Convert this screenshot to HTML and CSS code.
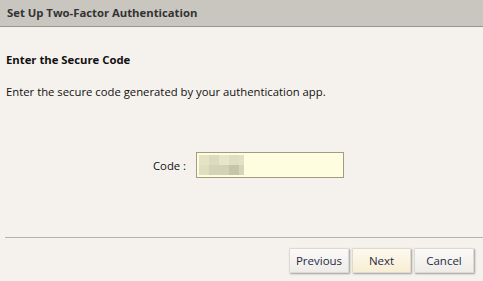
FILE: index.html
```html
<!DOCTYPE html>
<html lang="en">
<head>
    <meta charset="UTF-8">
    <title>Set Up Two-Factor Authentication</title>
    <link rel="stylesheet" href="styles.css">
</head>
<body>
    <div class="dialog">
        <div class="dialog-header">Set Up Two-Factor Authentication</div>
        <div class="dialog-body">
            <h3>Enter the Secure Code</h3>
            <p>Enter the secure code generated by your authentication app.</p>
            <div class="code-row">
                <label for="code">Code :</label>
                <div class="code-input">
                    <!-- blurred code preview -->
                    <div class="blur">
                        <span style="background:#e4e3c4"></span>
                        <span style="background:#dcdbbf"></span>
                        <span style="background:#e6e6c8"></span>
                        <span style="background:#dfdec2"></span>
                        <span style="background:#e2e1c6"></span>
                        <span style="background:#dfdec0"></span>
                        <span style="background:#d4d3b8"></span>
                        <span style="background:#d3d2b7"></span>
                        <span style="background:#c6c5ab"></span>
                        <span style="background:#d6d5bb"></span>
                    </div>
                </div>
            </div>
        </div>
        <div class="dialog-footer">
            <button>Previous</button>
            <button class="primary">Next</button>
            <button>Cancel</button>
        </div>
    </div>
</body>
</html>
```

FILE: styles.css
```css
body {
    margin: 0;
    font-family: "Open Sans", "Noto Sans", sans-serif;
    font-size: 11.3px;
    color: #111;
    background-color: #f5f2ed;
}
.dialog {
    width: 483px;
    height: 281px;
    display: flex;
    flex-direction: column;
}
.dialog-header {
    height: 27px;
    line-height: 25px;
    box-sizing: border-box;
    padding-left: 7px;
    background-color: #c9c6c0;
    border-bottom: 1px solid #999690;
    font-weight: bold;
    color: #333;
}
.dialog-body {
    flex: 1;
    padding: 0 6px;
}
.dialog-body h3 {
    margin: 25px 0 0;
    font-size: 11.3px;
    line-height: 16px;
}
.dialog-body p {
    margin: 16px 0 0;
    line-height: 16px;
}
.code-row {
    display: flex;
    align-items: center;
    margin-top: 52px;
    padding-left: 147px;
}
.code-row label {
    width: 43px;
}
.code-input {
    width: 144px;
    height: 24px;
    border: 1px solid #a39c80;
    background-color: #fffddf;
    display: flex;
    align-items: center;
    padding-left: 2px;
}
.blur {
    display: grid;
    grid-template-columns: 10px 10px 10px 10px 5px;
    grid-template-rows: 10px 10px;
}
.dialog-footer {
    box-sizing: border-box;
    margin: 0 0 0 5px;
    border-top: 1px solid #b5b3af;
    height: 44px;
    display: flex;
    justify-content: flex-end;
    align-items: flex-start;
    padding: 10px 9px 0 0;
    gap: 3px;
}
.dialog-footer button {
    font-family: inherit;
    font-size: 11.5px;
    color: #1f2a44;
    height: 25px;
    width: 60px;
    padding: 0;
    border: 1px solid #ddd9d3;
    border-radius: 1px;
    background: linear-gradient(#fbfaf8, #efece8);
    box-shadow: 1px 1px 2px rgba(0,0,0,0.35);
    cursor: pointer;
}
.dialog-footer button.primary {
    width: 59px;
    background: linear-gradient(#fdf9ee, #f8eed5);
}
```
